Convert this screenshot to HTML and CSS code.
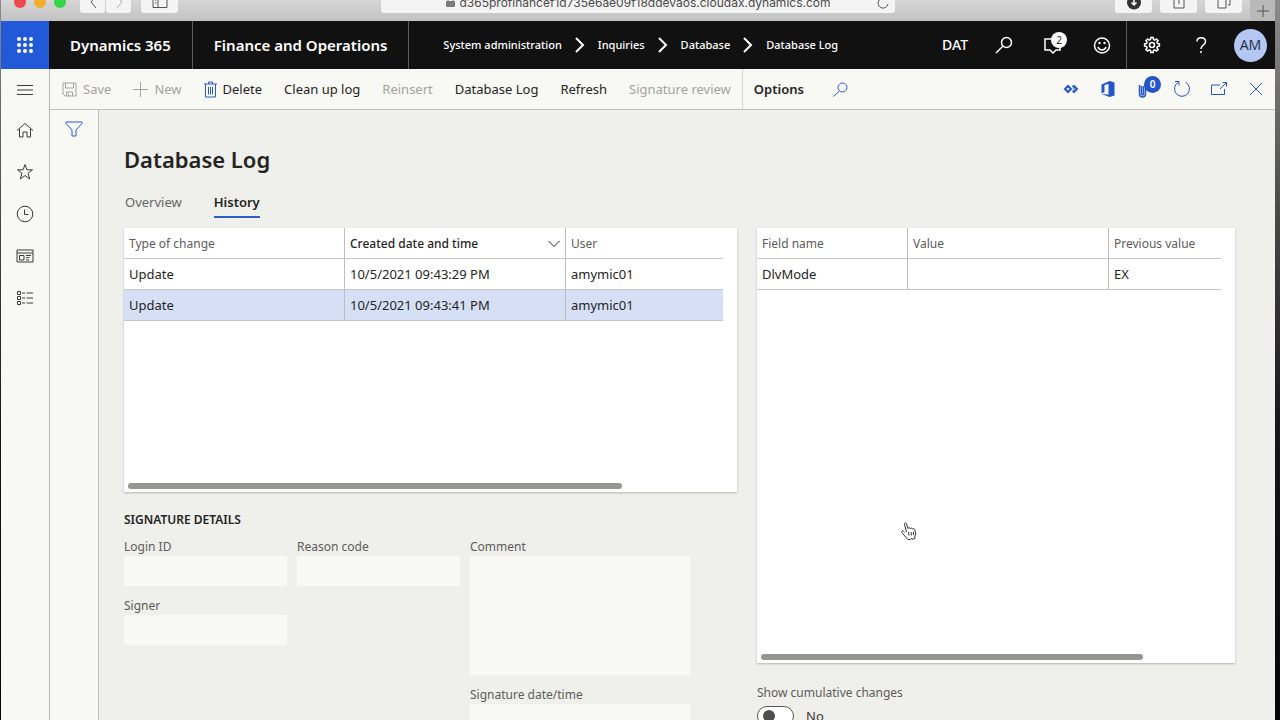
FILE: index.html
```html
<!DOCTYPE html>
<html lang="en">
<head>
<meta charset="utf-8">
<title>Database Log - Finance and Operations</title>
<link rel="stylesheet" href="styles.css">
</head>
<body>
<div class="window">
  <header class="browser">
    <div class="lights"><span class="light red"></span><span class="light amber"></span><span class="light green"></span></div>
    <div class="history">
      <button class="tool narrow" aria-label="Back"><svg width="24" height="24" viewBox="0 0 24 24"><path d="M15 7l-5 6 5 6" class="dark"/></svg></button>
      <button class="tool narrow" aria-label="Forward"><svg width="24" height="24" viewBox="0 0 24 24"><path d="M10 7l5 6-5 6" class="pale"/></svg></button>
    </div>
    <button class="tool" aria-label="Sidebar"><svg width="24" height="24" viewBox="0 0 24 24"><path d="M5 8h14v10.500H5zM10 8v10.500M7 11h1.500M7 14h1.500" class="dark"/></svg></button>
    <div class="address">
      <svg width="9" height="12" viewBox="0 0 9 12"><rect x="0" y="4" width="9" height="6" rx="1" fill="#7b7b7b"/><path d="M2 4V2a2.500 2.500 0 0 1 5 0v2" fill="none" stroke="#7b7b7b"/></svg>
      <span class="url">d365profinancef1d735e6ae09f18ddevaos.cloudax.dynamics.com</span>
      <button class="reload" aria-label="Reload"><svg width="14" height="14" viewBox="0 0 14 14"><path d="M11 4A5 5 0 1 0 12 8" class="dark"/></svg></button>
    </div>
    <div class="tools">
      <button class="tool" aria-label="Downloads"><svg width="24" height="24" viewBox="0 0 24 24"><circle cx="12" cy="13.500" r="7" fill="#333"/><path d="M12 9v7M9.500 13.500L12 16l2.500-2.500" fill="none" stroke="#fff" stroke-width="1.500"/></svg></button>
      <button class="tool" aria-label="Share"><svg width="24" height="24" viewBox="0 0 24 24"><path d="M9 9H7v10h10V9h-2M12 3v12" class="dark"/></svg></button>
      <button class="tool" aria-label="Tabs"><svg width="24" height="24" viewBox="0 0 24 24"><path d="M6 8h8v11H6zM16 16h2V5h-8v1" class="dark"/></svg></button>
    </div>
    <button class="newtab" aria-label="New tab"><svg width="12" height="12" viewBox="0 0 12 12"><path d="M6 0v12M0 6h12" class="dark"/></svg></button>
  </header>

  <nav class="topbar">
    <button class="waffle" aria-label="App launcher"><svg width="18" height="18" viewBox="0 0 18 18"><circle cx="3" cy="3" r="2"/><circle cx="9" cy="3" r="2"/><circle cx="15" cy="3" r="2"/><circle cx="3" cy="9" r="2"/><circle cx="9" cy="9" r="2"/><circle cx="15" cy="9" r="2"/><circle cx="3" cy="15" r="2"/><circle cx="9" cy="15" r="2"/><circle cx="15" cy="15" r="2"/></svg></button>
    <a class="brand" href="#">Dynamics 365</a>
    <a class="brand" href="#">Finance and Operations</a>
    <div class="crumbs">
      <a href="#">System administration</a>
      <svg width="10" height="16" viewBox="0 0 10 16"><path d="M1 1l7 7-7 7"/></svg>
      <a href="#">Inquiries</a>
      <svg width="10" height="16" viewBox="0 0 10 16"><path d="M1 1l7 7-7 7"/></svg>
      <a href="#">Database</a>
      <svg width="10" height="16" viewBox="0 0 10 16"><path d="M1 1l7 7-7 7"/></svg>
      <a href="#">Database Log</a>
    </div>
    <div class="session">
      <button class="company">DAT</button>
      <button class="navbtn" aria-label="Search"><svg width="18" height="18" viewBox="0 0 18 18"><circle cx="11.500" cy="6.500" r="5"/><path d="M8 10l-7 7"/></svg></button>
      <button class="navbtn" aria-label="Messages"><svg width="18" height="18" viewBox="0 0 18 18"><path d="M9 3H1v11h5l3 3 3-3h4V9"/></svg><span class="badge">2</span></button>
      <button class="navbtn" aria-label="Feedback"><svg width="18" height="18" viewBox="0 0 18 18"><circle cx="9" cy="9.500" r="7.500"/><path d="M5 11a4.200 4.200 0 0 0 8 0"/><circle cx="6.500" cy="7" r="1.200" fill="#fff" stroke="none"/><circle cx="11.500" cy="7" r="1.200" fill="#fff" stroke="none"/></svg></button>
    </div>
    <div class="account">
      <button class="navbtn" aria-label="Settings"><svg width="18" height="18" viewBox="0 0 18 18"><circle cx="9" cy="9" r="2.500"/><path d="M14.500 7.500L16.400 7.800V10.200L14.500 10.500 13.900 11.800 15.100 13.400 13.400 15.100 11.800 13.900 10.500 14.500 10.200 16.400H7.800L7.500 14.500 6.200 13.900 4.600 15.100 2.900 13.400 4.100 11.800 3.500 10.500 1.600 10.200V7.800L3.500 7.500 4.100 6.200 2.900 4.600 4.600 2.900 6.200 4.100 7.500 3.500 7.800 1.600H10.200L10.500 3.500 11.800 4.100 13.400 2.900 15.100 4.600 13.900 6.200z"/></svg></button>
      <button class="navbtn" aria-label="Help"><svg width="18" height="18" viewBox="0 0 18 18"><path d="M5 5.500C5 .5 13.500.5 13.500 5.500c0 3.500-4.500 3.500-4.500 7.500M9 15v2"/></svg></button>
      <button class="avatar">AM</button>
    </div>
  </nav>

  <div class="shell">
    <aside class="rail">
      <button class="expand" aria-label="Expand"><svg width="18" height="18" viewBox="0 0 18 18"><path d="M1 4.500h16M1 9h16M1 13.500h16"/></svg></button>
      <button aria-label="Home"><svg width="18" height="18" viewBox="0 0 18 18"><path d="M1 9.500L9 2.500l8 7M3.500 8v8H7v-5h4v5h3.500V8"/></svg></button>
      <button aria-label="Favorites"><svg width="18" height="18" viewBox="0 0 18 18"><path d="M9 1.500l1.900 5.300h5.600l-4.500 3.500 1.700 5.700L9 12.600 4.300 16 6 10.300 1.500 6.800h5.600z"/></svg></button>
      <button aria-label="Recent"><svg width="18" height="18" viewBox="0 0 18 18"><circle cx="9" cy="9" r="7.800"/><path d="M8.500 4.500v5h4"/></svg></button>
      <button aria-label="Workspaces"><svg width="18" height="18" viewBox="0 0 18 18"><path d="M1 3h16v12H1zM1 6h16M3.500 8.500H8V13H3.500zM10 8.500h5M10 10.700h3.500M10 13h3"/></svg></button>
      <button aria-label="Modules"><svg width="18" height="18" viewBox="0 0 18 18"><path d="M1.500 2.500h3v3h-3zM1.500 7.500h3v3h-3zM1.500 12.500h3v3h-3zM6 4h3M10.500 4H17M6 9h3M10.500 9H17M6 14h3M10.500 14H17"/></svg></button>
    </aside>

    <div class="workspace">
      <div class="actions">
        <button class="cmd" disabled><svg width="15" height="15" viewBox="0 0 15 15"><path d="M1 1h13v13H3l-2-2zM3.500 1v5h8V1M4.500 14v-4h6v4M6.500 11.500V14"/></svg>Save</button>
        <button class="cmd" disabled><svg width="15" height="15" viewBox="0 0 15 15"><path d="M7.500 0v15M0 7.500h15"/></svg>New</button>
        <button class="cmd"><svg class="blue" width="13" height="17" viewBox="0 0 13 17"><path d="M0 3h13M4.500 3V1h4v2M1.500 3v13h10V3M4.500 6v7.500M6.500 6v7.500M8.500 6v7.500"/></svg>Delete</button>
        <button class="cmd">Clean up log</button>
        <button class="cmd" disabled>Reinsert</button>
        <button class="cmd">Database Log</button>
        <button class="cmd">Refresh</button>
        <button class="cmd" disabled>Signature review</button>
        <button class="cmd options">Options</button>
        <button class="cmd find" aria-label="Search actions"><svg class="blue" width="15" height="15" viewBox="0 0 15 15"><circle cx="9.500" cy="5.500" r="4.500"/><path d="M6.500 9L0.500 14.500"/></svg></button>
        <div class="pagetools">
          <button aria-label="Power Apps"><svg width="18" height="18" viewBox="0 0 18 18"><path d="M6 6l3 3-3 3-3-3zM10.500 7L12 6l3 3-3 3-1.500-1M12 8.500v1" stroke-width="2"/></svg></button>
          <button aria-label="Open in Office"><svg width="18" height="18" viewBox="0 0 18 18"><path d="M2.500 4.500L10.500 1l5 1.500v13L10.500 17l-8-3 7 .5V4L5.500 5v7l-3 1.500z" fill="#2456c8" stroke="none"/></svg></button>
          <button aria-label="Attachments"><svg width="18" height="18" viewBox="0 0 18 18"><path d="M3.500 5v9a3 3 0 0 0 6 0V5M5.500 6v8a1 1 0 0 0 2 0V6" stroke-width="1.500"/></svg><span class="count">0</span></button>
          <button aria-label="Reload page"><svg width="18" height="18" viewBox="0 0 18 18"><path d="M5.500 2.200a7.500 7.500 0 1 0 7 0M2 1.500h4v4"/></svg></button>
          <button aria-label="Open in new window"><svg width="18" height="18" viewBox="0 0 18 18"><path d="M10 5H1.500v9.500h13V9M10 9l6.500-6.500M12.500 2.500h4v4"/></svg></button>
          <button aria-label="Close"><svg width="18" height="18" viewBox="0 0 18 18"><path d="M3 3l12 12M15 3L3 15"/></svg></button>
        </div>
      </div>

      <div class="body">
        <div class="filter"><button aria-label="Filter"><svg width="18" height="18" viewBox="0 0 18 18"><path d="M1 2h16v1.500L11 10v6H7v-6L1 3.500z"/></svg></button></div>
        <main class="page">
          <h1>Database Log</h1>
          <div class="tabs" role="tablist">
            <button role="tab" class="tab">Overview</button>
            <button role="tab" class="tab active" aria-selected="true">History</button>
          </div>
          <div class="columns">
            <section class="left">
              <div class="card changes">
                <table>
                  <colgroup><col class="w-type"><col class="w-date"><col></colgroup>
                  <thead><tr><th>Type of change</th><th class="sorted"><span>Created date and time</span><svg width="12" height="8" viewBox="0 0 12 8"><path d="M0.500 1L6 6.500 11.500 1"/></svg></th><th>User</th></tr></thead>
                  <tbody>
                    <tr><td>Update</td><td>10/5/2021 09:43:29 PM</td><td>amymic01</td></tr>
                    <tr class="selected"><td>Update</td><td>10/5/2021 09:43:41 PM</td><td>amymic01</td></tr>
                  </tbody>
                </table>
                <div class="scroll"><div class="thumb"></div></div>
              </div>
              <h2>SIGNATURE DETAILS</h2>
              <div class="form">
                <div class="group">
                  <div class="field"><label for="login">Login ID</label><input id="login" type="text" readonly></div>
                  <div class="field"><label for="signer">Signer</label><input id="signer" type="text" readonly></div>
                </div>
                <div class="group">
                  <div class="field"><label for="reason">Reason code</label><input id="reason" type="text" readonly></div>
                </div>
                <div class="group large">
                  <div class="field"><label for="comment">Comment</label><textarea id="comment" readonly></textarea></div>
                  <div class="field"><label for="signed">Signature date/time</label><input id="signed" type="text" readonly></div>
                </div>
              </div>
            </section>
            <section class="right">
              <div class="card values">
                <table>
                  <colgroup><col class="w-field"><col class="w-value"><col></colgroup>
                  <thead><tr><th>Field name</th><th>Value</th><th>Previous value</th></tr></thead>
                  <tbody><tr><td>DlvMode</td><td></td><td>EX</td></tr></tbody>
                </table>
                <div class="scroll"><div class="thumb"></div></div>
                <svg class="pointer" width="17" height="18" viewBox="0 0 17 18"><path d="M5.500 10L3.500 2.500C3 .8 5 .4 5.500 2L7 6.500c.5-1.200 2-1 2.300.2.500-1 2-.8 2.200.4.600-.9 2-.6 2.200.5l1 3.400c.3 1.500-.7 3-1 4l.2 1.500-3 .8-.5-1-1.200 1.200H7L2 12c-1-1-2-2.500-1-3s2 .3 2.500 1.500M7.500 10l.5 3.500M10 10l.4 3.500M12.200 9.700l.5 3.500"/></svg>
              </div>
              <div class="cumulative">
                <label for="cumulative">Show cumulative changes</label>
                <div class="switchrow"><input id="cumulative" type="checkbox" role="switch" class="switch"><span>No</span></div>
              </div>
            </section>
          </div>
        </main>
      </div>
    </div>
  </div>
</div>
</body>
</html>
```
FILE: styles.css
```css
* { box-sizing: border-box; }
body {
  margin: 0;
  padding: 0 5px 0 1px;
  height: 100vh;
  overflow: hidden;
  background: linear-gradient(#8c8c8c, #4c4645 30%, #15151c 60%, #05060a);
  font-family: "Noto Sans", "Open Sans", sans-serif;
  font-size: 13px;
  line-height: 20px;
  color: #252423;
}
button {
  border: 0;
  padding: 0;
  background: none;
  font: inherit;
  color: inherit;
  display: flex;
  align-items: center;
  justify-content: center;
}
button, a, svg { flex: none; }
a { color: inherit; text-decoration: none; }
svg { display: block; fill: none; stroke: currentColor; }
.window { height: 100%; display: flex; flex-direction: column; background: #efefeb; }

.browser {
  flex: none;
  height: 21px;
  display: flex;
  align-items: flex-end;
  padding-left: 13px;
  overflow: hidden;
  background: linear-gradient(#d6d6d6, #c2c2c2);
}
.browser svg { stroke: none; }
.browser .dark { fill: none; stroke: #555; }
.browser .pale { fill: none; stroke: #aaa; }
.lights { display: flex; gap: 8px; padding-bottom: 13px; width: 66px; }
.light { width: 12px; height: 12px; border-radius: 50%; }
.red { background: #f0484f; }
.amber { background: #f5ad2f; }
.green { background: #35d548; }
.history { display: flex; gap: 1px; margin-right: 10px; }
.tool, .address { height: 24px; margin-bottom: 8px; background: #f4f4f4; border-radius: 3px; }
.tool { width: 37px; }
.tool.narrow { width: 25px; }
.address { display: flex; align-items: center; flex: 1; margin-left: 203px; margin-right: 220px; padding-top: 4px; justify-content: center; gap: 5px; position: relative; font-size: 12px; color: #4a4a4a; font-family: Inter, sans-serif; }
.reload { position: absolute; right: 5px; top: 7px; }
.tools { display: flex; gap: 8px; margin-right: 8px; }
.newtab { width: 25px; height: 21px; background: #b9b9b9; }
.newtab svg { margin-bottom: 4px; }
.newtab { align-items: flex-end; }

.topbar { flex: none; height: 48px; display: flex; background: #111; color: #fff; }
.waffle { width: 48px; background: #2159d8; }
.waffle svg { stroke: none; fill: #fff; }
.brand { display: flex; align-items: center; padding: 0 21px; font-size: 15px; font-weight: 600; border-right: 1px solid #5c5c5c; }
.crumbs { display: flex; align-items: center; gap: 13px; padding-left: 34px; flex: 1; font-size: 11px; font-weight: 500; }
.crumbs svg { stroke-width: 2; }
.session, .account { display: flex; align-items: center; }
.session { border-right: 1px solid #5c5c5c; }
.company { font-size: 14px; font-weight: 500; padding-right: 11px; }
.navbtn { width: 49px; height: 48px; position: relative; }
.navbtn svg { stroke-width: 1.500; }
.badge { position: absolute; left: 23px; top: 11px; width: 16px; height: 16px; border-radius: 50%; background: #fff; color: #222; font-size: 10px; line-height: 16px; text-align: center; }
.avatar { width: 33px; height: 33px; border-radius: 50%; background: #b3c7f2; color: #29344f; font-size: 14px; margin: 0 8px 0 9px; }

.shell { flex: 1; min-height: 0; display: flex; }
.rail { width: 49px; flex: none; background: #f8f8f4; border-right: 1px solid #b5b5b1; color: #3b3a39; display: flex; flex-direction: column; }
.rail button { height: 42px; }
.rail .expand { height: 40px; padding-top: 2px; }
.workspace { flex: 1; min-width: 0; display: flex; flex-direction: column; }
.actions { flex: none; height: 41px; display: flex; align-items: center; padding: 0 1px; background: #f8f8f4; border-bottom: 1px solid #c0c0bc; }
.cmd { height: 40px; padding: 0 11px; gap: 6px; font-size: 13px; }
.cmd:disabled { color: #a3a3a0; }
.blue { color: #2a5bc9; }
.options { font-weight: 600; border-left: 1px solid #d6d6d2; }
.find { padding: 0 18px; }
.pagetools { margin-left: auto; display: flex; color: #2456c8; }
.pagetools button { width: 37px; height: 38px; position: relative; }
.count { position: absolute; left: 18px; top: 6px; width: 17px; height: 17px; border-radius: 50%; background: #2456c8; color: #fff; font-size: 10px; font-weight: 600; line-height: 17px; text-align: center; }

.body { flex: 1; min-height: 0; display: flex; }
.filter { width: 49px; flex: none; background: #f8f8f4; border-right: 1px solid #c0c0bc; color: #2a5bc9; display: flex; justify-content: center; align-items: flex-start; padding-top: 10px; }
.page { flex: 1; min-width: 0; padding: 33px 40px 0 25px; overflow: hidden; }
h1 { margin: 0; font-size: 22px; line-height: 32px; font-weight: 600; }
.tabs { display: flex; gap: 32px; padding: 17px 0 0 1px; }
.tab { height: 26px; padding-bottom: 5px; font-size: 13px; color: #666; border-bottom: 2px solid transparent; }
.tab.active { font-weight: 600; color: #252423; border-color: #2f5fc6; }
.columns { display: grid; grid-template-columns: 613fr 478fr; gap: 20px; margin-top: 10px; }
.left, .right { min-width: 0; }
.card { background: #fff; display: flex; flex-direction: column; box-shadow: 0 1px 2px rgba(0,0,0,.25); position: relative; padding-right: 14px; }
.changes { height: 264px; }
.values { height: 435px; }
table { width: 100%; table-layout: fixed; border-collapse: separate; border-spacing: 0; }
th, td { height: 31px; padding: 0 5px; text-align: left; border-bottom: 1px solid #c6c6c6; border-right: 1px solid #bdbdbd; white-space: nowrap; font-weight: 400; }
th { padding-top: 2px; font-size: 12px; color: #5d5c5a; }
th:last-child, td:last-child { border-right: 0; }
.w-type, .w-date { width: 221px; }
.w-field { width: 151px; }
.w-value { width: 201px; }
.sorted { color: #252423; font-weight: 500; }
.sorted svg { float: right; margin-top: 6px; }
.selected { background: #d5e0f6; }
.scroll { margin-top: auto; padding: 0 0 3px 4px; }
.thumb { width: 83%; height: 6px; border-radius: 3px; background: #959591; }
h2 { margin: 18px 0 0; font-size: 12px; line-height: 20px; font-weight: 600; }
.form { display: flex; gap: 10px; margin-top: 8px; }
.group { width: 163px; display: flex; flex-direction: column; gap: 11px; }
.group.large { width: 220px; }
.field { display: flex; flex-direction: column; font-size: 12px; line-height: 18px; color: #5d5c5a; }
input[type="text"], textarea { width: 100%; height: 30px; margin: 0; padding: 4px; border: 0; background: #f8f8f4; font: inherit; resize: none; outline: 0; }
textarea { height: 119px; }
.cumulative { margin-top: 20px; font-size: 12px; color: #5d5c5a; }
.switchrow { display: flex; align-items: center; gap: 12px; margin-top: 3px; font-size: 13px; color: #3b3a39; }
.switch { appearance: none; width: 37px; height: 20px; margin: 0; border: 1px solid #555; border-radius: 10px; background: #fff; display: flex; align-items: center; padding-left: 5px; }
.switch::before { content: ""; width: 12px; height: 12px; border-radius: 50%; background: #50504c; }
.pointer { position: absolute; left: 144px; top: 294px; color: #333; }
```
